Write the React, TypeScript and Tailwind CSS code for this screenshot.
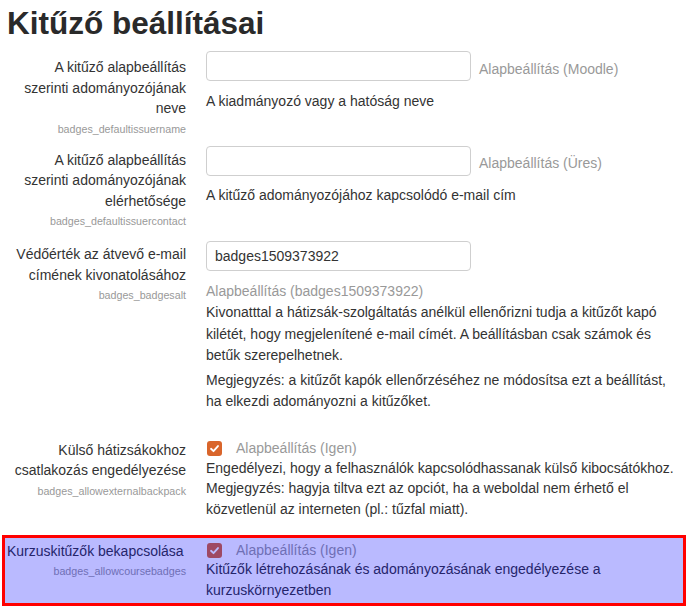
import React from "react";

const font = { fontFamily: '"Liberation Sans", Arial, sans-serif' };

function Check() {
  return (
    <span className="inline-flex items-center justify-center w-[15px] h-[15px] rounded-[3px] bg-[#d9652b] shrink-0">
      <svg width="11" height="11" viewBox="0 0 12 12">
        <path d="M2.2 6.3 L4.9 8.9 L9.8 3.3" fill="none" stroke="#fff" strokeWidth="2" strokeLinecap="round" strokeLinejoin="round" />
      </svg>
    </span>
  );
}

function Label({ lines, name, className = "" }: { lines: string[]; name: string; className?: string }) {
  return (
    <div className={"w-[186px] shrink-0 text-right " + className}>
      <div className="text-[14px] leading-[20.5px] text-[#333]">
        {lines.map((l, i) => (
          <div key={i}>{l}</div>
        ))}
      </div>
      <div className="text-[10.7px] leading-[20px] text-[#999]">{name}</div>
    </div>
  );
}

export default function App() {
  return (
    <div className="bg-white w-[688px] h-[609px] overflow-hidden text-[#333]" style={font}>
      <h2 className="pl-[7px] pt-[4px] text-[31.5px] leading-[38px] font-bold text-[#2a2a2a]">Kitűző beállításai</h2>

      {/* Row 1 */}
      <div className="flex gap-[20px] mt-[9px]">
        <Label className="pt-[6px]" lines={["A kitűző alapbeállítás", "szerinti adományozójának", "neve"]} name="badges_defaultissuername" />
        <div className="flex-1">
          <div className="flex items-center gap-[8px]">
            <div className="w-[265px] h-[30px] border border-[#cfcfcf] rounded-[4px] bg-white" />
            <span className="text-[14px] text-[#999] pt-[6px]">Alapbeállítás (Moodle)</span>
          </div>
          <div className="text-[14px] leading-[21px] mt-[10px]">A kiadmányozó vagy a hatóság neve</div>
        </div>
      </div>

      {/* Row 2 */}
      <div className="flex gap-[20px] mt-[7px]">
        <Label className="pt-[4px]" lines={["A kitűző alapbeállítás", "szerinti adományozójának", "elérhetősége"]} name="badges_defaultissuercontact" />
        <div className="flex-1">
          <div className="flex items-center gap-[8px]">
            <div className="w-[265px] h-[30px] border border-[#cfcfcf] rounded-[4px] bg-white" />
            <span className="text-[14px] text-[#999] pt-[6px]">Alapbeállítás (Üres)</span>
          </div>
          <div className="text-[14px] leading-[21px] mt-[9px]">A kitűző adományozójához kapcsolódó e-mail cím</div>
        </div>
      </div>

      {/* Row 3 */}
      <div className="flex gap-[20px] mt-[10px]">
        <Label className="pt-[3px]" lines={["Védőérték az átvevő e-mail", "címének kivonatolásához"]} name="badges_badgesalt" />
        <div className="flex-1">
          <div className="w-[265px] h-[30px] border border-[#cfcfcf] rounded-[4px] bg-white flex items-center px-[8px] text-[14px] text-[#333]">
            badges1509373922
          </div>
          <div className="text-[14px] leading-[21px] text-[#999] mt-[10px]">Alapbeállítás (badges1509373922)</div>
          <div className="text-[14px] leading-[21.5px] pr-[6px]">
            Kivonatttal a hátizsák-szolgáltatás anélkül ellenőrizni tudja a kitűzőt kapó kilétét, hogy megjelenítené e-mail címét. A beállításban csak számok és betűk szerepelhetnek.
          </div>
          <div className="text-[14px] leading-[21.5px] mt-[3px] pr-[6px]">
            Megjegyzés: a kitűzőt kapók ellenőrzéséhez ne módosítsa ezt a beállítást, ha elkezdi adományozni a kitűzőket.
          </div>
        </div>
      </div>

      {/* Row 4 */}
      <div className="flex gap-[20px] mt-[27px]">
        <Label lines={["Külső hátizsákokhoz", "csatlakozás engedélyezése"]} name="badges_allowexternalbackpack" />
        <div className="flex-1 pr-[4px]">
          <div className="flex items-center gap-[14px] h-[18px] pl-[1px]">
            <Check />
            <span className="text-[14px] text-[#999]">Alapbeállítás (Igen)</span>
          </div>
          <div className="text-[14px] leading-[20.5px]">
            Engedélyezi, hogy a felhasználók kapcsolódhassanak külső kibocsátókhoz. Megjegyzés: hagyja tiltva ezt az opciót, ha a weboldal nem érhető el közvetlenül az interneten (pl.: tűzfal miatt).
          </div>
        </div>
      </div>

      {/* Row 5 highlighted */}
      <div className="relative mt-[16px] mx-[2px] w-[684px] h-[71px]">
        <div className="flex gap-[20px] pt-[6px]">
          <div className="w-[184px] shrink-0 text-right">
            <div className="text-[14px] leading-[20px] text-[#333] text-left pl-[5px]">Kurzuskitűzők bekapcsolása</div>
            <div className="text-[10.7px] leading-[20px] text-[#999]">badges_allowcoursebadges</div>
          </div>
          <div className="flex-1 pr-[8px]">
            <div className="flex items-center gap-[14px] h-[18px] pl-[1px]">
              <Check />
              <span className="text-[14px] text-[#999]">Alapbeállítás (Igen)</span>
            </div>
            <div className="text-[14px] leading-[20.5px]">
              Kitűzők létrehozásának és adományozásának engedélyezése a kurzuskörnyezetben
            </div>
          </div>
        </div>
        <div className="absolute inset-0 bg-[rgba(0,0,255,0.27)] border-[3px] border-[#ff0000] pointer-events-none" />
      </div>
    </div>
  );
}
